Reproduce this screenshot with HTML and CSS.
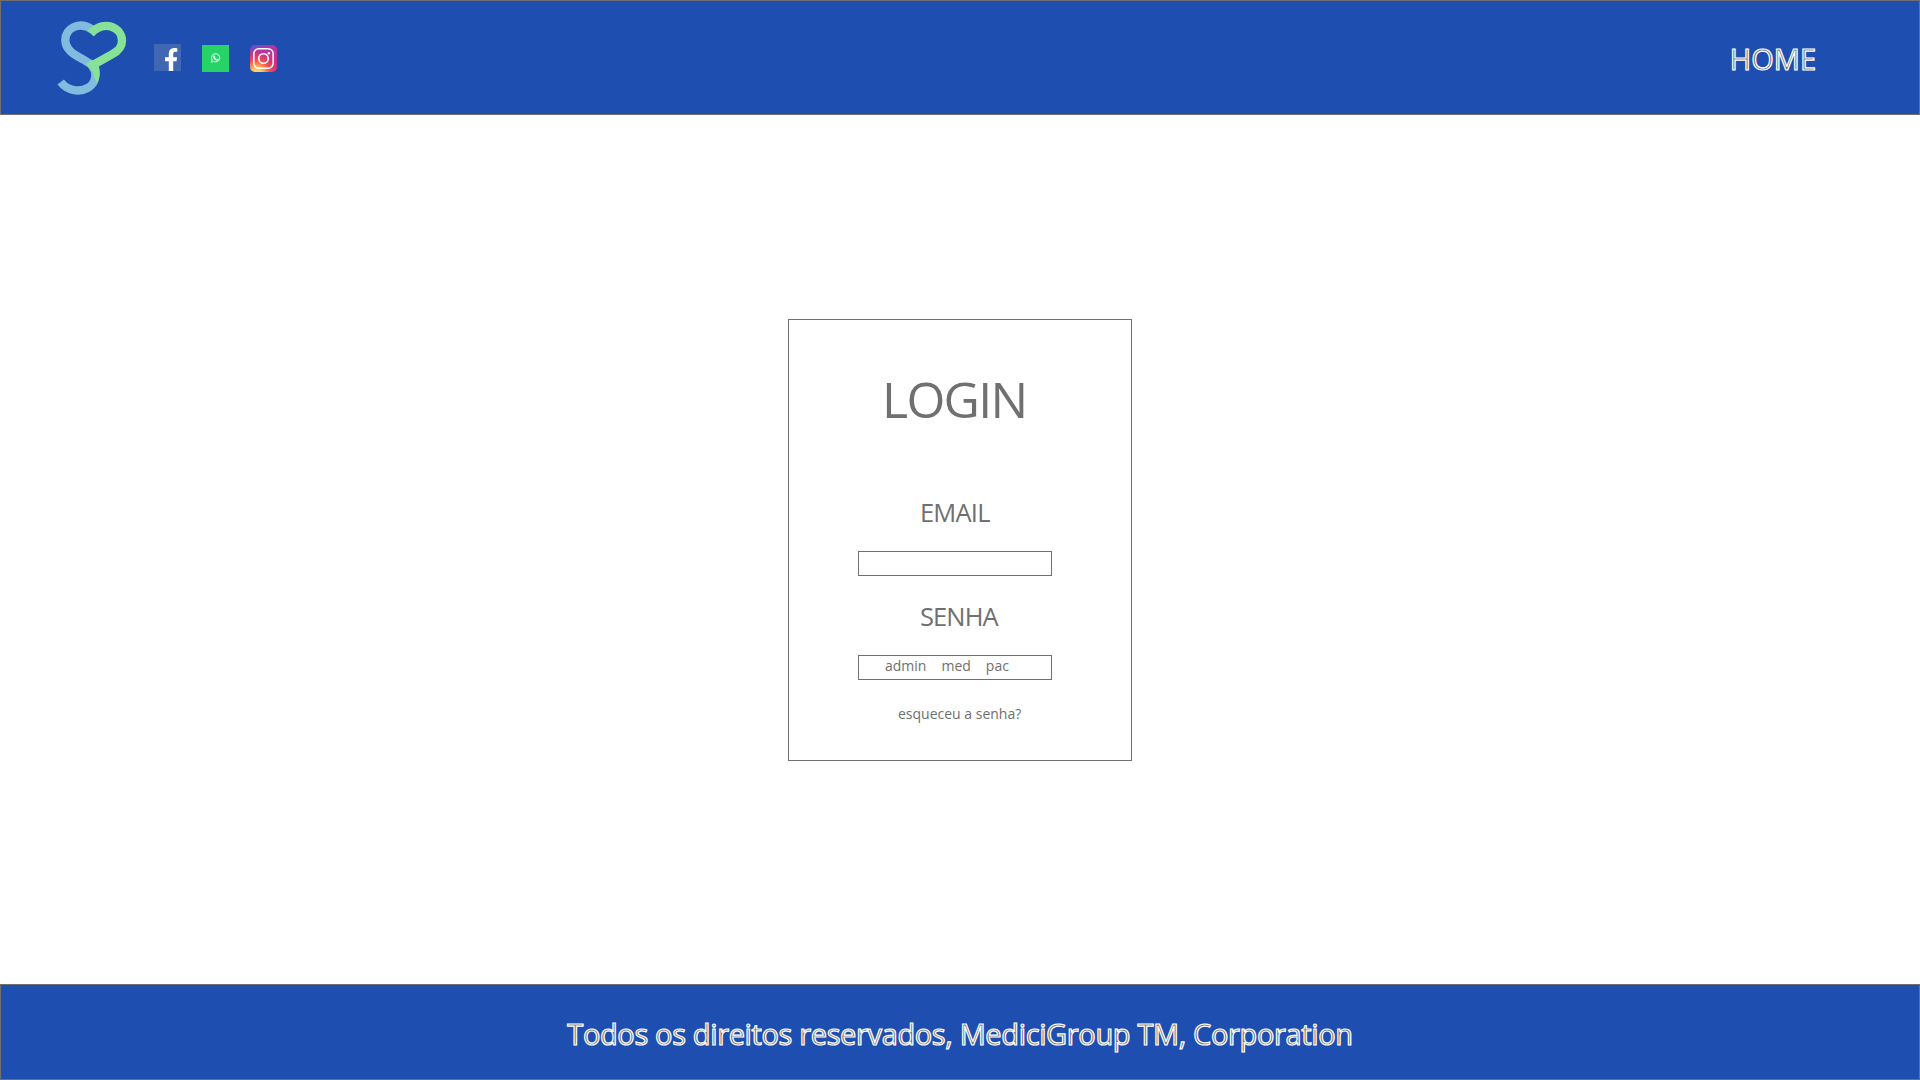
FILE: index.html
```html
<!DOCTYPE html>
<html lang="pt-BR">
<head>
<meta charset="utf-8">
<title>Login</title>
<link rel="stylesheet" href="styles.css">
</head>
<body>
<header class="bar header">
  <div class="brand">
    <svg class="logo" viewBox="0 3 330 339" aria-label="Logo">
      <g fill="none" stroke-width="25">
        <path stroke="#82bbe0" d="M157 89C118 61 76 85 76 120C76 160 124 171 152 193C174 215 169 248 145 263C116 280 81 270 62 246"/>
        <path stroke="#86e297" d="M152 101C193 56 246 83 246 122C246 146 229 156 216 163L148 201"/>
      </g>
      <path fill="#86e297" d="M139 193L155 179L177 200Q184 225 171 250Q162 234 158 217Q151 203 139 193Z"/>
    </svg>
    <nav class="social">
      <svg class="icon icon-facebook" viewBox="0 0 27 27" aria-label="Facebook">
        <path fill="#4267b2" d="M0 0h27v27H0z"/>
        <path fill="#fff" d="M14.800 27V17.300h-3.800v-4h3.800V10c0-4 2.300-6 5.500-6 1.300 0 2.300.2 3 .4v3.400h-1.800c-1.900 0-2.300 1-2.300 2.400v3.100h3.900l-.6 4h-3.300V27z"/>
      </svg>
      <svg class="icon" viewBox="0 0 27 27" aria-label="WhatsApp">
        <path fill="#25d366" d="M0 0h27v27H0z"/>
        <path fill="none" stroke="#fff" stroke-width=".9" d="M9.300 17.200l.7-2.500a4.100 4.100 0 1 1 1.700 1.700z"/>
        <path fill="#fff" d="M12 10.600l.8.1.6 1.300-.5.7q.7 1.200 1.800 1.600l.7-.7 1.300.7q-.2 1.300-1.500 1.300c-2 0-4.200-2.300-4.100-3.700q.1-1 .9-1.300z"/>
      </svg>
      <svg class="icon" viewBox="0 0 27 27" aria-label="Instagram">
        <defs>
          <linearGradient id="ig-base" x1="0" y1="0" x2="1" y2=".35"><stop offset="0" stop-color="#4b5bd0"/><stop offset=".5" stop-color="#a438b5"/><stop offset="1" stop-color="#c32f92"/></linearGradient>
          <radialGradient id="ig-glow" cx=".25" cy="1.050" r="1"><stop offset="0" stop-color="#ffdc75"/><stop offset=".2" stop-color="#fec760"/><stop offset=".48" stop-color="#f8504a"/><stop offset=".75" stop-color="#da2e79" stop-opacity=".8"/><stop offset="1" stop-color="#b535a5" stop-opacity="0"/></radialGradient>
        </defs>
        <rect width="27" height="27" rx="5" fill="url(#ig-base)"/>
        <rect width="27" height="27" rx="5" fill="url(#ig-glow)"/>
        <g fill="none" stroke="#fff" stroke-width="1.600"><rect x="3.800" y="3.800" width="19.400" height="19.400" rx="5"/><circle cx="13.500" cy="13.500" r="4.700"/></g>
        <circle cx="18.900" cy="8.200" r="1.200" fill="#fff"/>
      </svg>
    </nav>
  </div>
  <a class="home outlined">HOME</a>
</header>
<main class="content">
  <form class="card">
    <h1 class="title">LOGIN</h1>
    <label class="label label-email">EMAIL</label>
    <div class="field"></div>
    <label class="label label-password">SENHA</label>
    <div class="field hints"><span class="admin">admin</span><span class="med">med</span><span>pac</span></div>
    <a class="forgot">esqueceu a senha?</a>
  </form>
</main>
<footer class="bar footer">
  <p class="copyright outlined">Todos os direitos reservados, MediciGroup TM, Corporation</p>
</footer>
</body>
</html>
```
FILE: styles.css
```css
* { box-sizing: border-box; }
body {
  margin: 0;
  height: 1080px;
  display: flex;
  flex-direction: column;
  overflow: hidden;
  background: #fff;
  color: #707070;
  font-family: "Open Sans", "Noto Sans", sans-serif;
}
.bar {
  display: flex;
  background: #1e4eaf;
  border: 1px solid #707070;
}
.header {
  height: 115px;
  justify-content: space-between;
  padding: 0 103px 0 39px;
}
.brand { display: flex; }
.logo { width: 110px; height: 113px; }
.social { display: flex; gap: 21px; padding: 44px 0 0 4px; }
.icon { width: 27px; height: 27px; }
.icon-facebook { margin-top: -1px; }
.outlined {
  color: #707070;
  -webkit-text-stroke: 1.2px #fff;
  white-space: nowrap;
}
.home { padding-top: 38px; font-size: 29px; line-height: 40px; }
.content { flex: 1; padding-top: 204px; }
.card {
  width: 344px;
  height: 442px;
  margin: 0 auto;
  padding: 0 69px;
  border: 1px solid #707070;
  display: flex;
  flex-direction: column;
}
.title {
  margin: 44px 0 0 24px;
  font-size: 50px;
  font-weight: 400;
  line-height: 70px;
  letter-spacing: -1.7px;
}
.label { font-size: 25.500px; line-height: 34px; }
.label-email { margin: 61px 0 22px 62px; letter-spacing: -.8px; }
.label-password { margin: 23px 0 22px 62px; letter-spacing: -.9px; }
.field { flex: none; width: 194px; height: 25px; border: 1px solid #707070; }
.hints {
  display: flex;
  gap: 15px;
  padding-left: 26px;
  font-size: 14px;
  line-height: 20px;
}
.forgot { margin: 24px 0 0 40px; font-size: 14px; line-height: 20px; white-space: nowrap; }
.footer { height: 96px; justify-content: center; }
.copyright { margin: 29px 0 0; font-size: 29px; line-height: 40px; letter-spacing: -.36px; }
```
